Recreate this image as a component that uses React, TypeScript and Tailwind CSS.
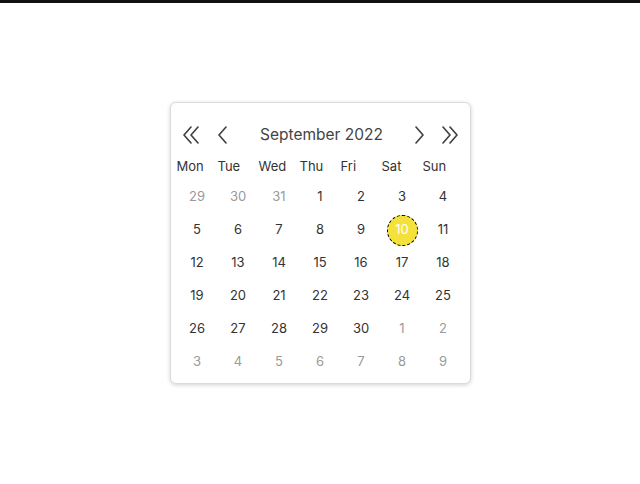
const DAYS = ['Mon', 'Tue', 'Wed', 'Thu', 'Fri', 'Sat', 'Sun'];

type Cell = { d: number; cur: boolean };

const buildCells = (): Cell[] => {
  const cells: Cell[] = [];
  [29, 30, 31].forEach((d) => cells.push({ d, cur: false }));
  for (let d = 1; d <= 30; d++) cells.push({ d, cur: true });
  for (let d = 1; d <= 9; d++) cells.push({ d, cur: false });
  return cells;
};

const Chevron = ({ dir, double }: { dir: 'l' | 'r'; double?: boolean }) => {
  const w = double ? 18 : 12;
  const paths = double
    ? dir === 'l'
      ? ['M9 1 L2 9 L9 17', 'M16 1 L9 9 L16 17']
      : ['M2 1 L9 9 L2 17', 'M9 1 L16 9 L9 17']
    : dir === 'l'
      ? ['M10 1 L3 9 L10 17']
      : ['M2 1 L9 9 L2 17'];
  return (
    <svg width={w} height={18} viewBox={`0 0 ${w} 18`} fill="none" stroke="#3f3f3f" strokeWidth={1.6} strokeLinecap="round" strokeLinejoin="round">
      {paths.map((d) => (
        <path key={d} d={d} />
      ))}
    </svg>
  );
};

export default function App() {
  const cells = buildCells();

  return (
    <div className="flex flex-col h-screen bg-white" style={{ fontFamily: 'Inter, "Noto Sans", sans-serif' }}>
      <div className="h-[3px] bg-[#111] shrink-0" />
      <div className="flex-1 flex items-center justify-center pb-[2px]">
        <div className="w-[301px] bg-white border border-[#dcdcdc] rounded-md shadow-[0_1px_4px_rgba(0,0,0,0.18)] px-[6px] pt-[16px] pb-[4px]">
          <div className="h-8 flex items-center text-[#444]">
            <div className="flex items-center pl-[5px] gap-[16px]">
              <button className="flex items-center"><Chevron dir="l" double /></button>
              <button className="flex items-center"><Chevron dir="l" /></button>
            </div>
            <div className="flex-1 text-center text-[15.5px] pl-[2px]">September 2022</div>
            <div className="flex items-center pr-[5px] gap-[15px]">
              <button className="flex items-center"><Chevron dir="r" /></button>
              <button className="flex items-center"><Chevron dir="r" double /></button>
            </div>
          </div>

          <div className="grid grid-cols-7 mt-[2px] h-[28px] items-center text-[13px] text-[#333]">
            {DAYS.map((d) => (
              <div key={d} className="text-left">{d}</div>
            ))}
          </div>

          <div className="grid grid-cols-7 auto-rows-[33px]">
            {cells.map((c, i) => {
              const selected = c.cur && c.d === 10;
              return (
                <div key={i} className="flex items-center justify-center text-[13px]">
                  {selected ? (
                    <span className="w-[31px] h-[31px] rounded-full bg-[#f4e13c] border border-dashed border-black text-white flex items-center justify-center">
                      {c.d}
                    </span>
                  ) : (
                    <span className={c.cur ? 'text-[#333]' : 'text-[#9a9a9a]'}>{c.d}</span>
                  )}
                </div>
              );
            })}
          </div>
        </div>
      </div>
    </div>
  );
}
